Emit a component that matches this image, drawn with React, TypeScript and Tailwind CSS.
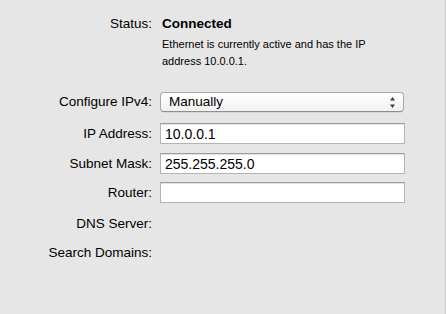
import React from 'react';

const font = { fontFamily: '"Liberation Sans", Arial, sans-serif' };

function Label({ children }: { children: React.ReactNode }) {
  return <div className="w-[152px] shrink-0 text-right text-[13.5px] text-black">{children}</div>;
}

function TextField({ value }: { value?: string }) {
  return (
    <div className="ml-2 flex h-[21px] w-[245px] items-center border border-[#b4b4b4] border-t-[#9c9c9c] bg-white pl-[4px] text-[14px] leading-none text-black shadow-[inset_0_1px_0_#e2e2e2]">
      {value}
    </div>
  );
}

function SelectArrows() {
  return (
    <svg width="7" height="13" viewBox="0 0 7 13" className="text-[#3c3c3c]">
      <path d="M3.5 1 L6 4.5 L1 4.5 Z" fill="currentColor" />
      <path d="M3.5 12 L6 8.5 L1 8.5 Z" fill="currentColor" />
    </svg>
  );
}

export default function App() {
  return (
    <div className="h-[314px] w-[446px] border-r border-[#c9c9c9] bg-[#e6e6e6]" style={font}>
      <div className="pt-[15px]">
        {/* Status */}
        <div className="flex items-center leading-[17px]">
          <Label>Status:</Label>
          <div className="ml-[10px] text-[13.5px] font-bold text-black">Connected</div>
        </div>
        <div className="mt-1 flex leading-[17px]">
          <div className="w-[152px] shrink-0" />
          <p className="ml-[10px] w-[240px] text-[11px] text-black">
            Ethernet is currently active and has the IP address 10.0.0.1.
          </p>
        </div>

        {/* Configure */}
        <div className="mt-[22px] flex items-center">
          <Label>Configure IPv4:</Label>
          <div className="ml-2 flex h-[20px] w-[244px] items-center justify-between rounded-[4px] border border-[#a9a9a9] border-b-[#8e8e8e] bg-gradient-to-b from-white to-[#f1f1f1] pl-[8px] pr-[7px] text-[13.5px] text-black shadow-[0_1px_0_rgba(0,0,0,0.06)]">
            <span>Manually</span>
            <SelectArrows />
          </div>
        </div>

        {/* Fields */}
        <div className="mt-[11px] flex items-center">
          <Label>IP Address:</Label>
          <TextField value="10.0.0.1" />
        </div>
        <div className="mt-[9px] flex items-center">
          <Label>Subnet Mask:</Label>
          <TextField value="255.255.255.0" />
        </div>
        <div className="mt-[8px] flex items-center">
          <Label>Router:</Label>
          <TextField />
        </div>

        <div className="mt-[12px] flex leading-[17px]">
          <Label>DNS Server:</Label>
        </div>
        <div className="mt-[12px] flex leading-[17px]">
          <Label>Search Domains:</Label>
        </div>
      </div>
    </div>
  );
}
